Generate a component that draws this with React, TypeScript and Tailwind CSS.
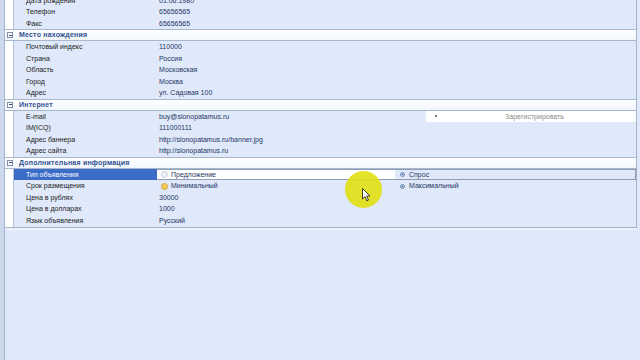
import React from "react";

type Row = { label: string; value?: string; kind?: "email" | "type" | "term"; selected?: boolean };
type Section = { title?: string; rows: Row[] };

const sections: Section[] = [
  {
    rows: [
      { label: "Дата рождения", value: "01.06.1980" },
      { label: "Телефон", value: "65656565" },
      { label: "Факс", value: "65656565" },
    ],
  },
  {
    title: "Место нахождения",
    rows: [
      { label: "Почтовый индекс", value: "110000" },
      { label: "Страна", value: "Россия" },
      { label: "Область", value: "Московская" },
      { label: "Город", value: "Москва" },
      { label: "Адрес", value: "ул. Садовая 100" },
    ],
  },
  {
    title: "Интернет",
    rows: [
      { label: "E-mail", value: "buy@slonopatamus.ru", kind: "email" },
      { label: "IM(ICQ)", value: "111000111" },
      { label: "Адрес баннера", value: "http://slonopatamus.ru/banner.jpg" },
      { label: "Адрес сайта", value: "http://slonopatamus.ru" },
    ],
  },
  {
    title: "Дополнительная информация",
    rows: [
      { label: "Тип объявления", kind: "type", selected: true },
      { label: "Срок размещения", kind: "term" },
      { label: "Цена в рублях", value: "30000" },
      { label: "Цена в долларах", value: "1000" },
      { label: "Язык объявления", value: "Русский" },
    ],
  },
];

/* ----- радио-кружки ----- */
function RadioEmpty() {
  return <span className="w-[7px] h-[7px] rounded-full border border-[#c8cfd9] bg-[#eef1f5] mr-[3px]" />;
}
function RadioHover() {
  return <span className="w-[7px] h-[7px] rounded-full border border-[#d6a13c] bg-[#f5cd5c] mr-[3px]" />;
}
function RadioSmall() {
  return (
    <span className="w-[5px] h-[5px] rounded-full border border-[#6f8fb8] bg-[#b9cbe4] mr-[4px] ml-[1px] flex items-center justify-center">
      <span className="w-[1px] h-[1px] bg-[#3a5a8a]" />
    </span>
  );
}

function DataRow({ row }: { row: Row }) {
  return (
    <div className="flex h-[11.6px] leading-[11.6px]">
      {/* левый отступ */}
      <div className="w-[9px] bg-white border-r border-[#b3c2d8]" />
      {/* название */}
      <div
        className={`w-[143px] pl-[12px] text-[7px] whitespace-nowrap ${
          row.selected ? "bg-[#3b6cc7] text-white" : "text-[#222222]"
        }`}
      >
        {row.label}
      </div>
      {/* значение */}
      {row.kind === "type" ? (
        <div className="flex-1 flex border border-[#8d9db5] border-l-0 h-[11.6px]">
          <div className="w-[238px] bg-white flex items-center pl-[4px] text-[7px] text-[#1f3566]">
            <RadioEmpty />
            Предложение
          </div>
          <div className="flex-1 flex items-center pl-[4px] text-[7px] text-[#1f3566]">
            <RadioSmall />
            Спрос
          </div>
        </div>
      ) : row.kind === "term" ? (
        <div className="flex-1 flex">
          <div className="w-[238px] flex items-center pl-[4px] text-[7px] text-[#1f3566]">
            <RadioHover />
            Минимальный
          </div>
          <div className="flex-1 flex items-center pl-[4px] text-[7px] text-[#1f3566]">
            <RadioSmall />
            Максимальный
          </div>
        </div>
      ) : row.kind === "email" ? (
        <div className="flex-1 flex">
          <div className="w-[269px] pl-[2px] text-[7px] text-[#1f3566] whitespace-nowrap">{row.value}</div>
          <div className="flex-1 bg-white flex items-center text-[7px] text-[#8a8a8a]">
            <span className="ml-[9px] w-[2px] h-[2px] bg-[#777]" />
            <span className="flex-1 text-center pr-[4px]">Зарегистрировать</span>
          </div>
        </div>
      ) : (
        <div className="flex-1 pl-[2px] text-[7px] text-[#1f3566] whitespace-nowrap">{row.value}</div>
      )}
    </div>
  );
}

function Header({ title }: { title: string }) {
  return (
    <div className="flex items-center h-[11.6px] bg-[linear-gradient(#ffffff,#f2f6fc)] border-y border-[#a7b7cd]">
      <span className="ml-[2px] w-[6px] h-[6px] border border-[#7d8ea8] bg-white flex items-center justify-center">
        <span className="w-[3px] h-[1px] bg-[#3c4f6e]" />
      </span>
      <span className="ml-[6px] text-[7px] font-bold text-[#2f4f8f] tracking-[0.2px] whitespace-nowrap">{title}</span>
    </div>
  );
}

export default function App() {
  return (
    <div className="relative w-[640px] h-[360px] overflow-hidden bg-[#dfe9f9] flex font-['Liberation_Sans',sans-serif]">
      {/* рамка окна слева */}
      <div className="w-[5px] bg-[#ccd9ec] border-r border-[#a3b4cc]" />

      {/* сетка свойств */}
      <div className="flex-1 flex flex-col">
        <div className="-mt-[5.3px] mr-[3px] border-r border-[#a3b4cc] border-b">
          {sections.map((s, i) => (
            <div key={i}>
              {s.title && <Header title={s.title} />}
              {s.rows.map((r) => (
                <DataRow key={r.label} row={r} />
              ))}
            </div>
          ))}
        </div>
        <div className="h-[2px] bg-[#eef3fb] mr-[3px]" />
        <div className="flex-1" />
      </div>

      {/* подсветка курсора */}
      <div className="absolute left-[345px] top-[171px] w-[37px] h-[37px] rounded-full bg-[#e2e012] opacity-90" />
      <svg className="absolute left-[362px] top-[188px]" width="9" height="14" viewBox="0 0 9 14">
        <path d="M0.5 0.5 L0.5 11 L3 8.6 L4.8 12.8 L6.4 12.1 L4.7 8 L8 8 Z" fill="#fff" stroke="#111" strokeWidth="0.8" />
      </svg>
    </div>
  );
}
